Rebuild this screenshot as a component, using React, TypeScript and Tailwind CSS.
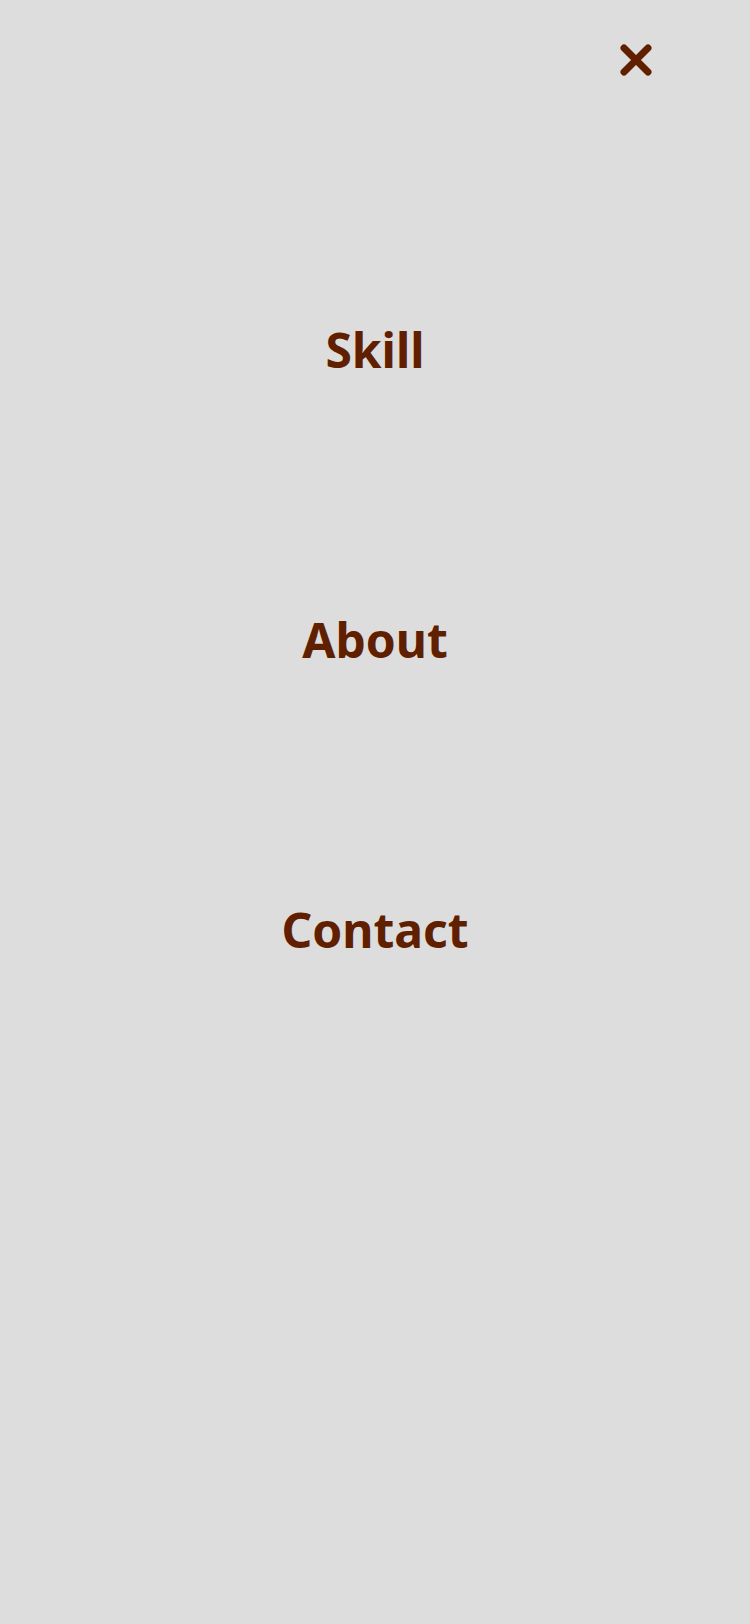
const links = ["Skill", "About", "Contact"];

export default function App() {
  return (
    <div className="min-h-screen bg-[#dddddd] font-['Segoe_UI','Noto_Sans',sans-serif] text-[#602000]">
      <header className="flex h-30 items-center justify-end pr-[90px]">
        <button type="button" aria-label="Close menu" className="p-2">
          <svg className="size-8" viewBox="0 0 32 32" fill="none" stroke="currentColor" strokeWidth="7" strokeLinecap="round">
            <path d="M4 4L28 28M28 4L4 28" />
          </svg>
        </button>
      </header>
      <nav className="pt-[194px]">
        <ul className="flex flex-col items-center gap-[218px]">
          {links.map((label) => (
            <li key={label}>
              <a href={"#" + label.toLowerCase()} className="block text-[48px] leading-[72px] font-bold">
                {label}
              </a>
            </li>
          ))}
        </ul>
      </nav>
    </div>
  );
}
